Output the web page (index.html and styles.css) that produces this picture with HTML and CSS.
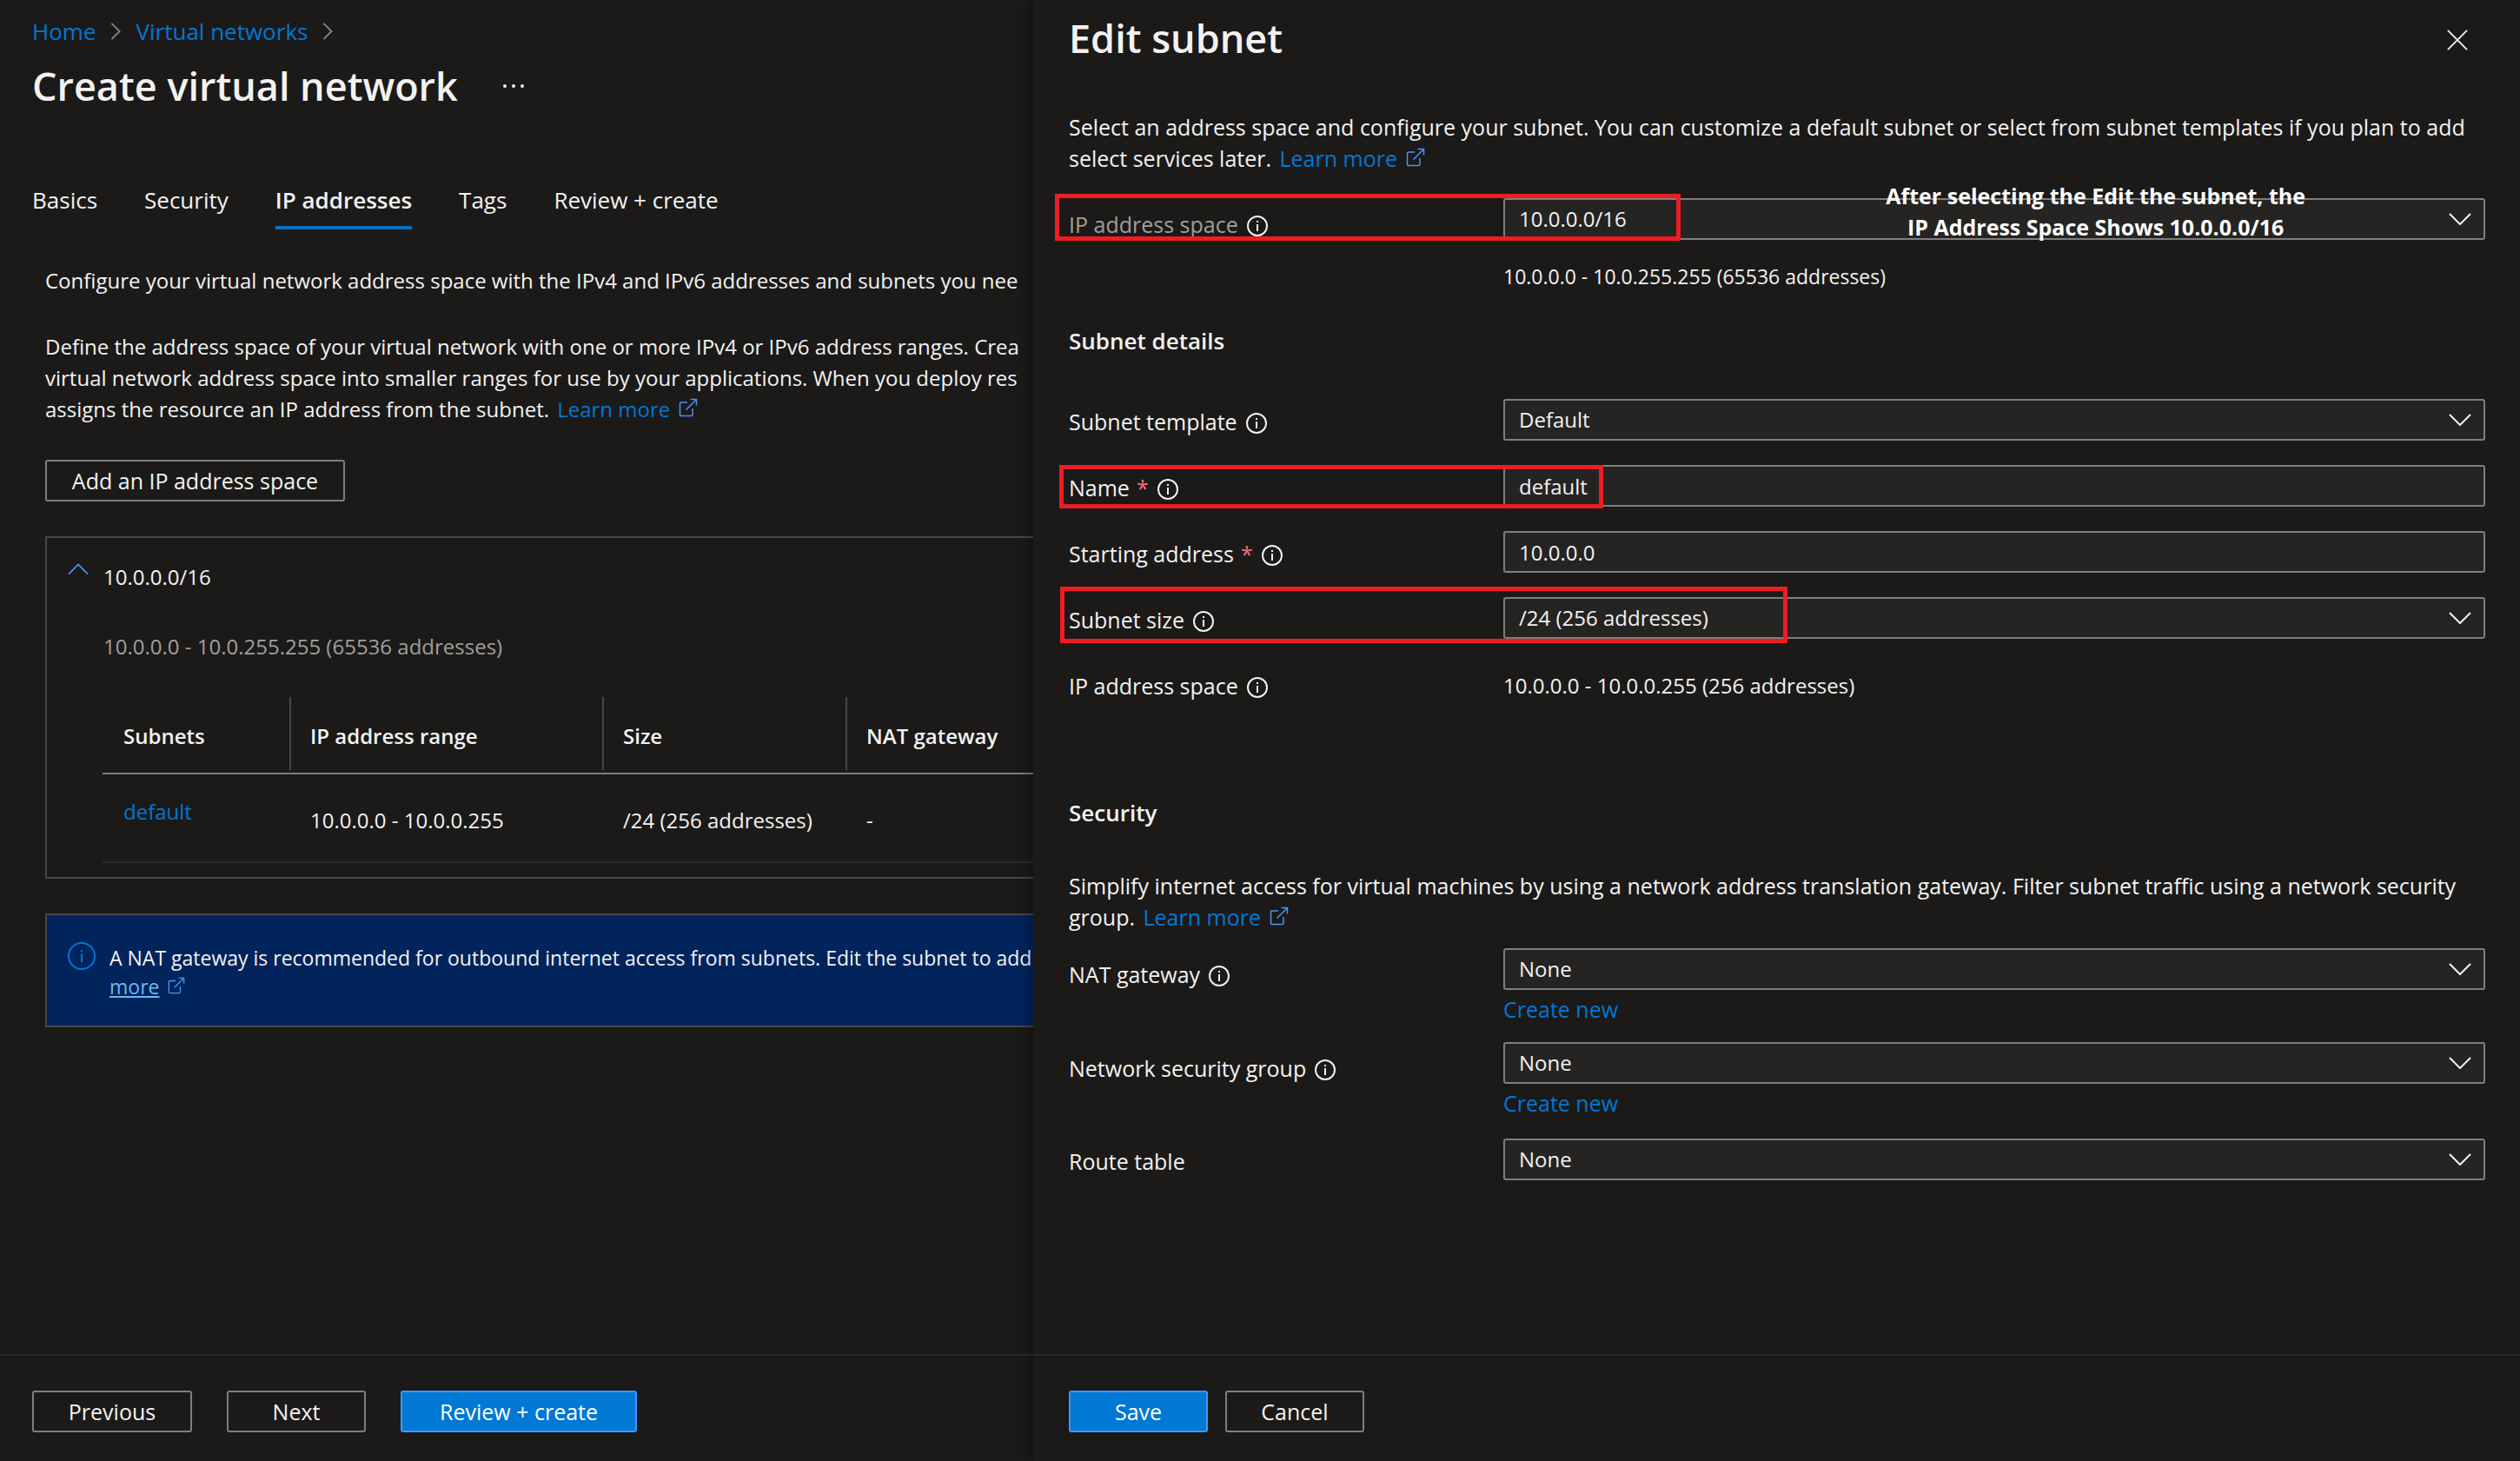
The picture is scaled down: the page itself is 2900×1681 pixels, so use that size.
FILE: index.html
```html
<!DOCTYPE html>
<html lang="en">
<head>
<meta charset="utf-8">
<meta name="viewport" content="width=device-width, initial-scale=1">
<title>Create virtual network</title>
<link rel="stylesheet" href="styles.css">
</head>
<body>
<svg class="sprite" aria-hidden="true">
  <symbol id="i-info" viewBox="0 0 24 24"><circle cx="12" cy="12" r="11" fill="none" stroke="currentColor" stroke-width="2"/><path d="M11 6h2v2h-2zM11 10h2v8h-2z" fill="currentColor"/></symbol>
  <symbol id="i-ext" viewBox="0 0 22 22"><path d="M10 5H3q-1.500 0-1.500 1.500V19q0 1.500 1.500 1.500h11.500q1.500 0 1.500-1.500V12M8.500 13.500L20 2M13.500 1.500h7v7" fill="none" stroke="currentColor" stroke-width="1.500"/></symbol>
  <symbol id="i-down" viewBox="0 0 26 14"><path d="M1 1l12 12L25 1" fill="none" stroke="currentColor" stroke-width="2"/></symbol>
  <symbol id="i-right" viewBox="0 0 14 24"><path d="M2 2l10 10L2 22" fill="none" stroke="currentColor" stroke-width="2"/></symbol>
</svg>
<div class="portal">
  <main class="page">
    <div class="page-body">
      <nav class="crumbs" aria-label="Breadcrumb">
        <a href="#">Home</a><svg class="crumb-sep"><use href="#i-right"/></svg>
        <a href="#">Virtual networks</a><svg class="crumb-sep"><use href="#i-right"/></svg>
      </nav>
      <header class="page-title">
        <h1>Create virtual network</h1>
        <button class="more" type="button" aria-label="More actions"><svg viewBox="0 0 24 4"><circle cx="2" cy="2" r="2"/><circle cx="12" cy="2" r="2"/><circle cx="22" cy="2" r="2"/></svg></button>
      </header>
      <nav class="tabs" aria-label="Steps">
        <a href="#">Basics</a><a href="#">Security</a><a href="#" class="active" aria-current="page">IP addresses</a><a href="#">Tags</a><a href="#">Review + create</a>
      </nav>
      <div class="content">
        <p>Configure your virtual network address space with the IPv4 and IPv6 addresses and subnets you nee</p>
        <p>Define the address space of your virtual network with one or more IPv4 or IPv6 address ranges. Crea<br>virtual network address space into smaller ranges for use by your applications. When you deploy res<br>assigns the resource an IP address from the subnet. <a href="#" class="ext">Learn more<svg><use href="#i-ext"/></svg></a></p>
        <button type="button" class="btn btn-add">Add an IP address space</button>
        <section class="card">
          <div class="card-head">
            <svg class="collapse" viewBox="0 0 26 14"><path d="M1 13L13 1l12 12" fill="none" stroke="currentColor" stroke-width="2"/></svg>
            <span>10.0.0.0/16</span>
          </div>
          <div class="card-range">10.0.0.0 - 10.0.255.255 (65536 addresses)</div>
          <table class="subnets">
            <colgroup><col class="c1"><col class="c2"><col class="c3"><col></colgroup>
            <thead><tr><th>Subnets</th><th>IP address range</th><th>Size</th><th>NAT gateway</th></tr></thead>
            <tbody><tr><td class="name"><a href="#">default</a></td><td>10.0.0.0 - 10.0.0.255</td><td>/24 (256 addresses)</td><td>-</td></tr></tbody>
          </table>
        </section>
        <div class="banner">
          <svg class="banner-icon" viewBox="0 0 32 32"><circle cx="16" cy="16" r="15" fill="none" stroke="currentColor" stroke-width="2"/><path d="M15 9h2v2h-2zM15 13h2v10h-2z" fill="currentColor"/></svg>
          <p>A NAT gateway is recommended for outbound internet access from subnets. Edit the subnet to add<br><a href="#">more</a><svg class="banner-ext"><use href="#i-ext"/></svg></p>
        </div>
      </div>
    </div>
    <footer class="actions page-actions">
      <button type="button" class="btn w-prev">Previous</button>
      <button type="button" class="btn w-next">Next</button>
      <button type="button" class="btn primary w-review">Review + create</button>
    </footer>
  </main>

  <aside class="panel" aria-labelledby="panel-title">
    <form class="panel-body">
      <header class="panel-head">
        <h2 id="panel-title">Edit subnet</h2>
        <button type="button" class="close" aria-label="Close"><svg viewBox="0 0 26 26"><path d="M1 1l24 24M25 1L1 25" fill="none" stroke="currentColor" stroke-width="2"/></svg></button>
      </header>
      <p class="desc">Select an address space and configure your subnet. You can customize a default subnet or select from subnet templates if you plan to add<br>select services later. <a href="#" class="ext">Learn more<svg><use href="#i-ext"/></svg></a></p>

      <div class="row low first">
        <label for="space" class="muted">IP address space<svg class="info"><use href="#i-info"/></svg></label>
        <div class="field">
          <div class="select"><select id="space"><option>10.0.0.0/16</option></select><svg><use href="#i-down"/></svg></div>
          <div class="hint">10.0.0.0 - 10.0.255.255 (65536 addresses)</div>
        </div>
        <div class="mark mark-space"></div>
        <div class="note">After selecting the Edit the subnet, the<br>IP Address Space Shows 10.0.0.0/16</div>
      </div>

      <h3>Subnet details</h3>
      <div class="row">
        <label for="template">Subnet template<svg class="info"><use href="#i-info"/></svg></label>
        <div class="select"><select id="template"><option>Default</option></select><svg><use href="#i-down"/></svg></div>
      </div>
      <div class="row">
        <label for="name">Name <span class="req">*</span><svg class="info"><use href="#i-info"/></svg></label>
        <input id="name" type="text" value="default">
        <div class="mark mark-name"></div>
      </div>
      <div class="row">
        <label for="start">Starting address <span class="req">*</span><svg class="info"><use href="#i-info"/></svg></label>
        <input id="start" type="text" value="10.0.0.0">
      </div>
      <div class="row">
        <label for="size">Subnet size<svg class="info"><use href="#i-info"/></svg></label>
        <div class="select"><select id="size"><option>/24 (256 addresses)</option></select><svg><use href="#i-down"/></svg></div>
        <div class="mark mark-size"></div>
      </div>
      <div class="row">
        <span class="label">IP address space<svg class="info"><use href="#i-info"/></svg></span>
        <span class="value">10.0.0.0 - 10.0.0.255 (256 addresses)</span>
      </div>

      <h3 class="security">Security</h3>
      <p class="desc-security">Simplify internet access for virtual machines by using a network address translation gateway. Filter subnet traffic using a network security<br>group. <a href="#" class="ext">Learn more<svg><use href="#i-ext"/></svg></a></p>
      <div class="row low">
        <label for="nat">NAT gateway<svg class="info"><use href="#i-info"/></svg></label>
        <div class="field">
          <div class="select"><select id="nat"><option>None</option></select><svg><use href="#i-down"/></svg></div>
          <a href="#" class="create">Create new</a>
        </div>
      </div>
      <div class="row low">
        <label for="nsg">Network security group<svg class="info"><use href="#i-info"/></svg></label>
        <div class="field">
          <div class="select"><select id="nsg"><option>None</option></select><svg><use href="#i-down"/></svg></div>
          <a href="#" class="create">Create new</a>
        </div>
      </div>
      <div class="row route">
        <label for="route">Route table</label>
        <div class="select"><select id="route"><option>None</option></select><svg><use href="#i-down"/></svg></div>
      </div>
    </form>
    <footer class="actions panel-actions">
      <button type="button" class="btn primary w-next">Save</button>
      <button type="button" class="btn w-next">Cancel</button>
    </footer>
  </aside>
</div>
</body>
</html>
```
FILE: styles.css
```css
:root {
  --bg: #1b1a19;
  --text: #f3f2f1;
  --link: #0078d4;
  --line: #7f7e7c;
  --field: #252423;
}

* { box-sizing: border-box; }

body {
  margin: 0;
  background: var(--bg);
  color: var(--text);
  font: 24px/36px "Segoe UI", "Open Sans", "Noto Sans", sans-serif;
}

h1, h2, h3, p { margin: 0; }
a { color: var(--link); text-decoration: none; }
button, input, select { font: inherit; color: inherit; margin: 0; }
svg { fill: currentColor; }
.sprite { position: absolute; width: 0; height: 0; }

.portal { display: flex; min-height: 100vh; }

.page, .panel { display: flex; flex-direction: column; min-width: 0; }
.page { flex: 41; overflow: hidden; white-space: nowrap; }
.panel { flex: 59; font-size: 25px; background: var(--bg); box-shadow: -2px 0 16px rgba(0, 0, 0, 0.4); z-index: 1; }
.page-body, .panel-body { flex: 1; }

/* Page header */
.crumbs { display: flex; align-items: center; padding: 18px 0 0 37px; font-size: 26px; }
.crumb-sep { width: 14px; height: 22px; margin: 0 16px; color: #8a8886; }
.page-title { display: flex; align-items: center; gap: 52px; padding: 13px 0 0 37px; }
h1, h2 { font-size: 45px; line-height: 64px; font-weight: 600; }
.more { border: 0; padding: 0; background: none; display: flex; }
.more svg { width: 24px; height: 4px; }

.tabs { display: flex; padding: 81px 0 0 37px; gap: 54px; font-size: 26px; }
.tabs a { color: var(--text); padding-bottom: 12px; }
.tabs .active { font-weight: 600; border-bottom: 4px solid #106ebe; }

.content { padding: 41px 0 0 52px; }
.content > p { padding-bottom: 40px; }
.ext { margin-left: 3px; }
.ext svg { width: 22px; height: 22px; margin-left: 10px; color: #4894fe; }

/* Buttons */
.btn {
  height: 48px;
  padding: 0;
  border: 2px solid var(--line);
  border-radius: 3px;
  background: transparent;
  font-size: 25px;
}
.btn.primary { background: #0078d4; border-color: #4894fe; color: #fff; }
.btn-add { width: 345px; display: block; }
.w-prev { width: 184px; }
.w-next { width: 160px; }
.w-review { width: 272px; }

.actions { display: flex; padding: 40px 0 33px; border-top: 2px solid #2b2a29; }
.page-actions { gap: 40px; padding-left: 37px; }
.panel-actions { gap: 20px; padding-left: 41px; }

/* Address space card */
.card { margin-top: 40px; border: 2px solid #484746; border-right: 0; padding: 27px 0 16px 24px; }
.card-head { display: flex; gap: 17px; }
.collapse { width: 24px; height: 14px; margin-top: 2px; color: #4894fe; }
.card-range { padding: 44px 0 0 41px; color: #a19f9d; }
.subnets { width: 1200px; margin: 40px 0 0 40px; border-collapse: collapse; table-layout: fixed; }
.c1 { width: 215px; }
.c2 { width: 360px; }
.c3 { width: 280px; }
.subnets th, .subnets td { text-align: left; padding: 0 0 0 24px; vertical-align: middle; }
.subnets th { height: 88px; padding-top: 2px; font-weight: 600; border-bottom: 2px solid #7f7e7c; background: linear-gradient(#484746, #484746) 0 0 / 2px 84px no-repeat; }
.subnets th:first-child { background: none; }
.subnets td { height: 102px; padding-top: 6px; border-bottom: 2px solid #2d2c2b; }
.subnets td.name { padding: 0 0 14px 24px; }

/* Recommendation banner */
.banner {
  display: flex;
  gap: 16px;
  margin-top: 40px;
  padding: 31px 0 28px 24px;
  border: 2px solid #484746;
  border-right: 0;
  background: #00245b;
  font-size: 23px;
  line-height: 33px;
}
.banner p { padding-top: 2px; }
.banner-icon { flex: none; width: 32px; height: 32px; color: #0078d4; }
.banner a { color: #6cb8f6; text-decoration: underline; }
.banner-ext { width: 20px; height: 20px; margin-left: 10px; color: #4894fe; }

/* Edit panel */
.panel-body { padding: 12px 40px 0 41px; }
.panel-head { display: flex; justify-content: space-between; }
.close { border: 0; background: none; padding: 4px 0 0; width: 44px; display: flex; align-items: center; }
.close svg { width: 24px; height: 24px; }
.desc { padding-top: 52px; }

.row { position: relative; display: grid; grid-template-columns: 500px minmax(0, 1fr); align-items: start; padding-bottom: 28px; }
label, .label { display: flex; align-items: center; padding-top: 8px; }
.low > label { padding-top: 12px; }
.muted { color: #a19f9d; }
.req { color: #f1707b; margin-left: 8px; }
.info { width: 24px; height: 24px; margin: 4px 0 0 10px; color: var(--text); }
.value { padding-top: 8px; font-size: 24px; }

.first { padding: 28px 0 0; }
.route { padding-top: 3px; }
.hint { padding-top: 24px; font-size: 23px; }
h3 { font-size: 26px; line-height: 36px; font-weight: 600; padding: 38px 0 49px; }
h3.security { padding: 82px 0 48px; }
.desc-security { padding-bottom: 18px; }

.select { display: flex; align-items: center; position: relative; }
select, input {
  appearance: none;
  width: 100%;
  height: 48px;
  padding: 0 16px;
  border: 2px solid var(--line);
  border-radius: 3px;
  background: var(--field);
}
select, input { font-size: 24px; }
.select svg { position: absolute; right: 16px; width: 26px; height: 14px; pointer-events: none; }
.create { display: block; padding-top: 4px; margin-bottom: -8px; }

/* Annotations laid over the form */
.mark { position: absolute; border: 5px solid #ee1c23; pointer-events: none; }
.mark-space { left: -16px; top: 23px; width: 720px; height: 54px; }
.mark-name { left: -11px; top: 0; width: 626px; height: 50px; }
.mark-size { left: -10px; top: -12px; width: 837px; height: 65px; }
.note { position: absolute; right: 207px; top: 7px; font-weight: 700; text-align: center; color: #fff; pointer-events: none; }
```
